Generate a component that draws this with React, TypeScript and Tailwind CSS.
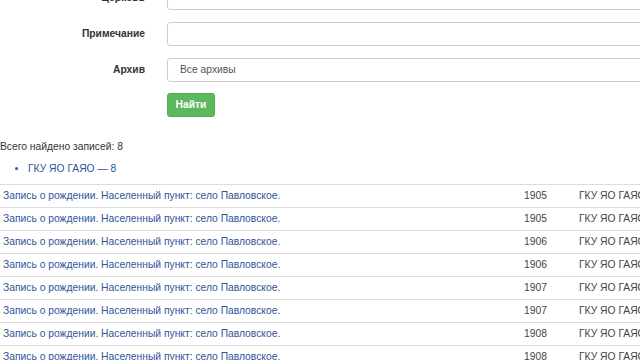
import React from "react";

const rows = [
  "1905",
  "1905",
  "1906",
  "1906",
  "1907",
  "1907",
  "1908",
  "1908",
];

export default function App() {
  return (
    <div
      className="w-[640px] h-[360px] overflow-hidden bg-white text-[10.3px] text-[#333]"
      style={{ fontFamily: '"Liberation Sans", Arial, sans-serif' }}
    >
      <div className="-mt-[14px]">
        <div className="flex flex-col gap-[12px]">
          <div className="flex items-center">
            <div className="w-[145px] shrink-0 text-right font-bold">Церковь</div>
            <div className="ml-[22px] h-[24px] w-[500px] shrink-0 rounded-[3px] border border-[#ccc]" />
          </div>
          <div className="flex items-center">
            <div className="w-[145px] shrink-0 text-right font-bold">Примечание</div>
            <div className="ml-[22px] h-[24px] w-[500px] shrink-0 rounded-[3px] border border-[#ccc]" />
          </div>
          <div className="flex items-center">
            <div className="w-[145px] shrink-0 text-right font-bold">Архив</div>
            <div className="ml-[22px] flex h-[24px] w-[500px] shrink-0 items-center rounded-[3px] border border-[#ccc] pl-[12px] text-[#555]">
              Все архивы
            </div>
          </div>
        </div>
        <div className="mt-[11px] pl-[167px]">
          <button className="h-[24px] w-[48px] rounded-[3px] border border-[#4cae4c] bg-[#5cb85c] font-bold text-white">
            Найти
          </button>
        </div>
        <div className="mt-[22px] leading-[16px]">Всего найдено записей: 8</div>
        <ul className="mt-[6px] list-disc pl-[28px] leading-[16px]">
          <li className="text-[#2f5597]">ГКУ ЯО ГАЯО — 8</li>
        </ul>
        <div className="mt-[7px]">
          {rows.map((y, i) => (
            <div key={i} className="flex h-[23px] items-center border-t border-[#ddd]">
              <div className="w-[524px] shrink-0 pl-[3px] text-[#2f5597]">
                Запись о рождении. Населенный пункт: село Павловское.
              </div>
              <div className="w-[55px] shrink-0 text-[#444]">{y}</div>
              <div className="shrink-0 whitespace-nowrap text-[#444]">ГКУ ЯО ГАЯО</div>
            </div>
          ))}
        </div>
      </div>
    </div>
  );
}
